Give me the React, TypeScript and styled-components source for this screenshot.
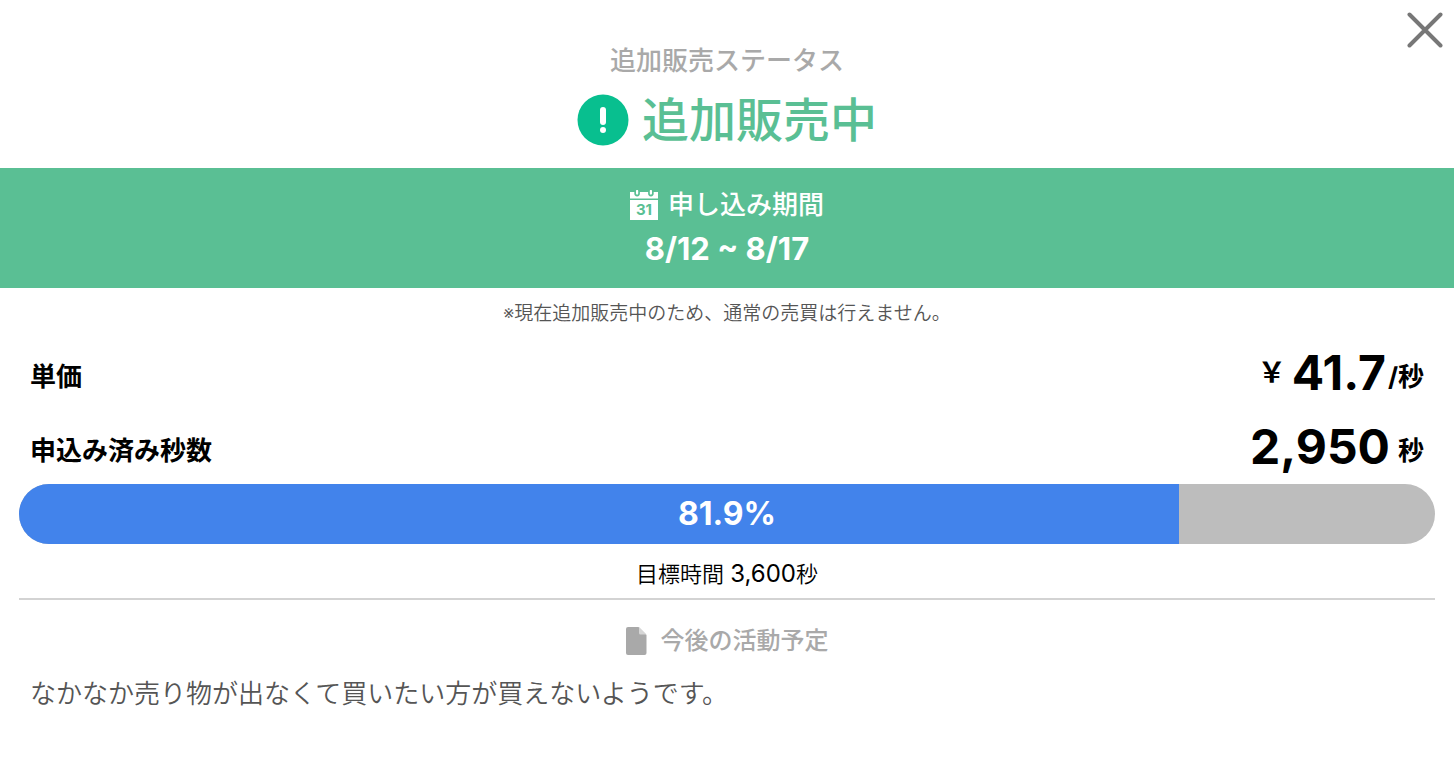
import React from "react";
import styled, { createGlobalStyle } from "styled-components";

const GlobalStyle = createGlobalStyle`
  *, *::before, *::after { box-sizing: border-box; }
  body {
    margin: 0;
    background: #fff;
    color: #000;
    font-family: Inter, "Noto Sans CJK JP", sans-serif;
  }
  h1, h2, p, dl, dt, dd { margin: 0; font-weight: inherit; }
`;

const Panel = styled.main`
  position: relative;
`;

const CloseButton = styled.button`
  position: absolute;
  top: 12px;
  right: 11px;
  width: 36px;
  height: 36px;
  padding: 0;
  border: 0;
  background: none;
  cursor: pointer;

  svg { display: block; }
`;

const StatusHeader = styled.header`
  display: flex;
  flex-direction: column;
  align-items: center;
  padding: 40px 0 10px;
`;

const StatusCaption = styled.h1`
  font-size: 26px;
  line-height: 42px;
  font-weight: 500;
  color: #a9a9a9;
`;

const StatusLine = styled.p`
  display: flex;
  align-items: center;
  gap: 13px;
  font-size: 47px;
  line-height: 76px;
  font-weight: 500;
  color: #5abf94;
`;

const PeriodBanner = styled.section`
  display: flex;
  flex-direction: column;
  align-items: center;
  padding: 14px 0 18px;
  background: #5abf94;
  color: #fff;
`;

const PeriodTitle = styled.h2`
  display: flex;
  align-items: center;
  gap: 10px;
  font-size: 26px;
  line-height: 46px;
  font-weight: 500;
`;

const PeriodDates = styled.p`
  font-size: 31px;
  line-height: 42px;
  font-weight: 700;
`;

const Notice = styled.p`
  padding-top: 10px;
  font-size: 19px;
  line-height: 32px;
  font-weight: 350;
  text-align: center;
  color: #555;
`;

const Figures = styled.dl`
  padding: 6px 30px 0;
`;

const FigureRow = styled.div`
  display: flex;
  justify-content: space-between;
  align-items: flex-start;
  height: 74px;
  line-height: 82px;
`;

const FigureLabel = styled.dt`
  font-size: 26px;
  font-weight: 700;
`;

const FigureValue = styled.dd`
  display: flex;
  align-items: flex-start;
  font-size: 26px;
  font-weight: 700;
`;

const Amount = styled.span`
  font-size: 48px;
  line-height: 74px;
  font-weight: 700;
`;

const Yen = styled.span`
  margin-right: 6px;
  font-size: 28px;
  line-height: 74px;
  font-weight: 700;
`;

const Unit = styled.span<{ $spaced?: boolean }>`
  margin-left: ${(p) => (p.$spaced ? 8 : 2)}px;
`;

const Progress = styled.section`
  margin: 0 19px;
  border-bottom: 2px solid #d3d3d3;
`;

const Track = styled.div`
  position: relative;
  height: 60px;
  border-radius: 30px;
  overflow: hidden;
  background: #bdbdbd;
`;

const Fill = styled.div`
  height: 100%;
  background: #4283eb;
`;

const Percent = styled.span`
  position: absolute;
  inset: 0;
  font-size: 32px;
  line-height: 60px;
  font-weight: 700;
  text-align: center;
  color: #fff;
`;

const Goal = styled.p`
  font-size: 22px;
  line-height: 34px;
  padding: 13px 0 7px;
  font-weight: 350;
  text-align: center;

  span { font-size: 24px; font-weight: 400; }
`;

const Plans = styled.section`
  padding: 20px 30px;
`;

const PlansTitle = styled.h2`
  display: flex;
  justify-content: center;
  align-items: center;
  gap: 14px;
  font-size: 24px;
  line-height: 42px;
  font-weight: 500;
  color: #a9a9a9;
`;

const PlansText = styled.p`
  padding-top: 12px;
  font-size: 26px;
  line-height: 40px;
  font-weight: 350;
  color: #555;
`;

const AlertIcon = () => (
  <svg width="52" height="52" viewBox="0 0 52 52" aria-hidden="true">
    <circle cx="26" cy="26" r="25.500" fill="#08bf8f" />
    <path d="M26 16v12" stroke="#fff" strokeWidth="6" strokeLinecap="round" />
    <circle cx="26" cy="36" r="3" fill="#fff" />
  </svg>
);

const CalendarIcon = () => (
  <svg width="28" height="30" viewBox="0 0 28 30" aria-hidden="true">
    <path
      d="M0 2h4.300v1.600a2.800 2.800 0 0 0 5.600 0V2h8.200v1.600a2.800 2.800 0 0 0 5.600 0V2H28v6.400H0z"
      fill="#fff"
    />
    <path d="M7.100 1v2.600M20.900 1v2.600" stroke="#fff" strokeWidth="2.200" strokeLinecap="round" />
    <path d="M0 10h28v20H0z" fill="#fff" />
    <text
      x="14"
      y="25"
      textAnchor="middle"
      fontFamily="Inter, sans-serif"
      fontSize="15"
      fontWeight="700"
      fill="#5abf94"
    >
      31
    </text>
  </svg>
);

const FileIcon = () => (
  <svg width="21" height="28" viewBox="0 0 21 28" aria-hidden="true">
    <path d="M2 0h10.500L20.500 8v18a2 2 0 0 1-2 2H2a2 2 0 0 1-2-2V2a2 2 0 0 1 2-2z" fill="#a9a9a9" />
    <path d="M13 0l7.500 7.500H14.500a1.500 1.500 0 0 1-1.500-1.500z" fill="#d6d6d6" />
  </svg>
);

const progress = 81.9;

export default function App() {
  return (
    <>
      <GlobalStyle />
      <Panel lang="ja">
        <CloseButton type="button" aria-label="閉じる">
          <svg width="36" height="36" viewBox="0 0 36 36" aria-hidden="true">
            <path d="M2.500 2.500l31 31M33.500 2.500l-31 31" stroke="#777" strokeWidth="4" strokeLinecap="round" />
          </svg>
        </CloseButton>

        <StatusHeader>
          <StatusCaption>追加販売ステータス</StatusCaption>
          <StatusLine>
            <AlertIcon />
            追加販売中
          </StatusLine>
        </StatusHeader>

        <PeriodBanner>
          <PeriodTitle>
            <CalendarIcon />
            申し込み期間
          </PeriodTitle>
          <PeriodDates>8/12 ~ 8/17</PeriodDates>
        </PeriodBanner>

        <Notice>※現在追加販売中のため、通常の売買は行えません。</Notice>

        <Figures>
          <FigureRow>
            <FigureLabel>単価</FigureLabel>
            <FigureValue>
              <Yen>￥</Yen>
              <Amount>41.7</Amount>
              <Unit>/秒</Unit>
            </FigureValue>
          </FigureRow>
          <FigureRow>
            <FigureLabel>申込み済み秒数</FigureLabel>
            <FigureValue>
              <Amount>2,950</Amount>
              <Unit $spaced>秒</Unit>
            </FigureValue>
          </FigureRow>
        </Figures>

        <Progress>
          <Track
            role="progressbar"
            aria-label="申込み済み秒数"
            aria-valuenow={progress}
            aria-valuemin={0}
            aria-valuemax={100}
          >
            <Fill style={{ width: `${progress}%` }} />
            <Percent>{progress}%</Percent>
          </Track>
          <Goal>
            目標時間 <span>3,600</span>秒
          </Goal>
        </Progress>

        <Plans>
          <PlansTitle>
            <FileIcon />
            今後の活動予定
          </PlansTitle>
          <PlansText>なかなか売り物が出なくて買いたい方が買えないようです。</PlansText>
        </Plans>
      </Panel>
    </>
  );
}
